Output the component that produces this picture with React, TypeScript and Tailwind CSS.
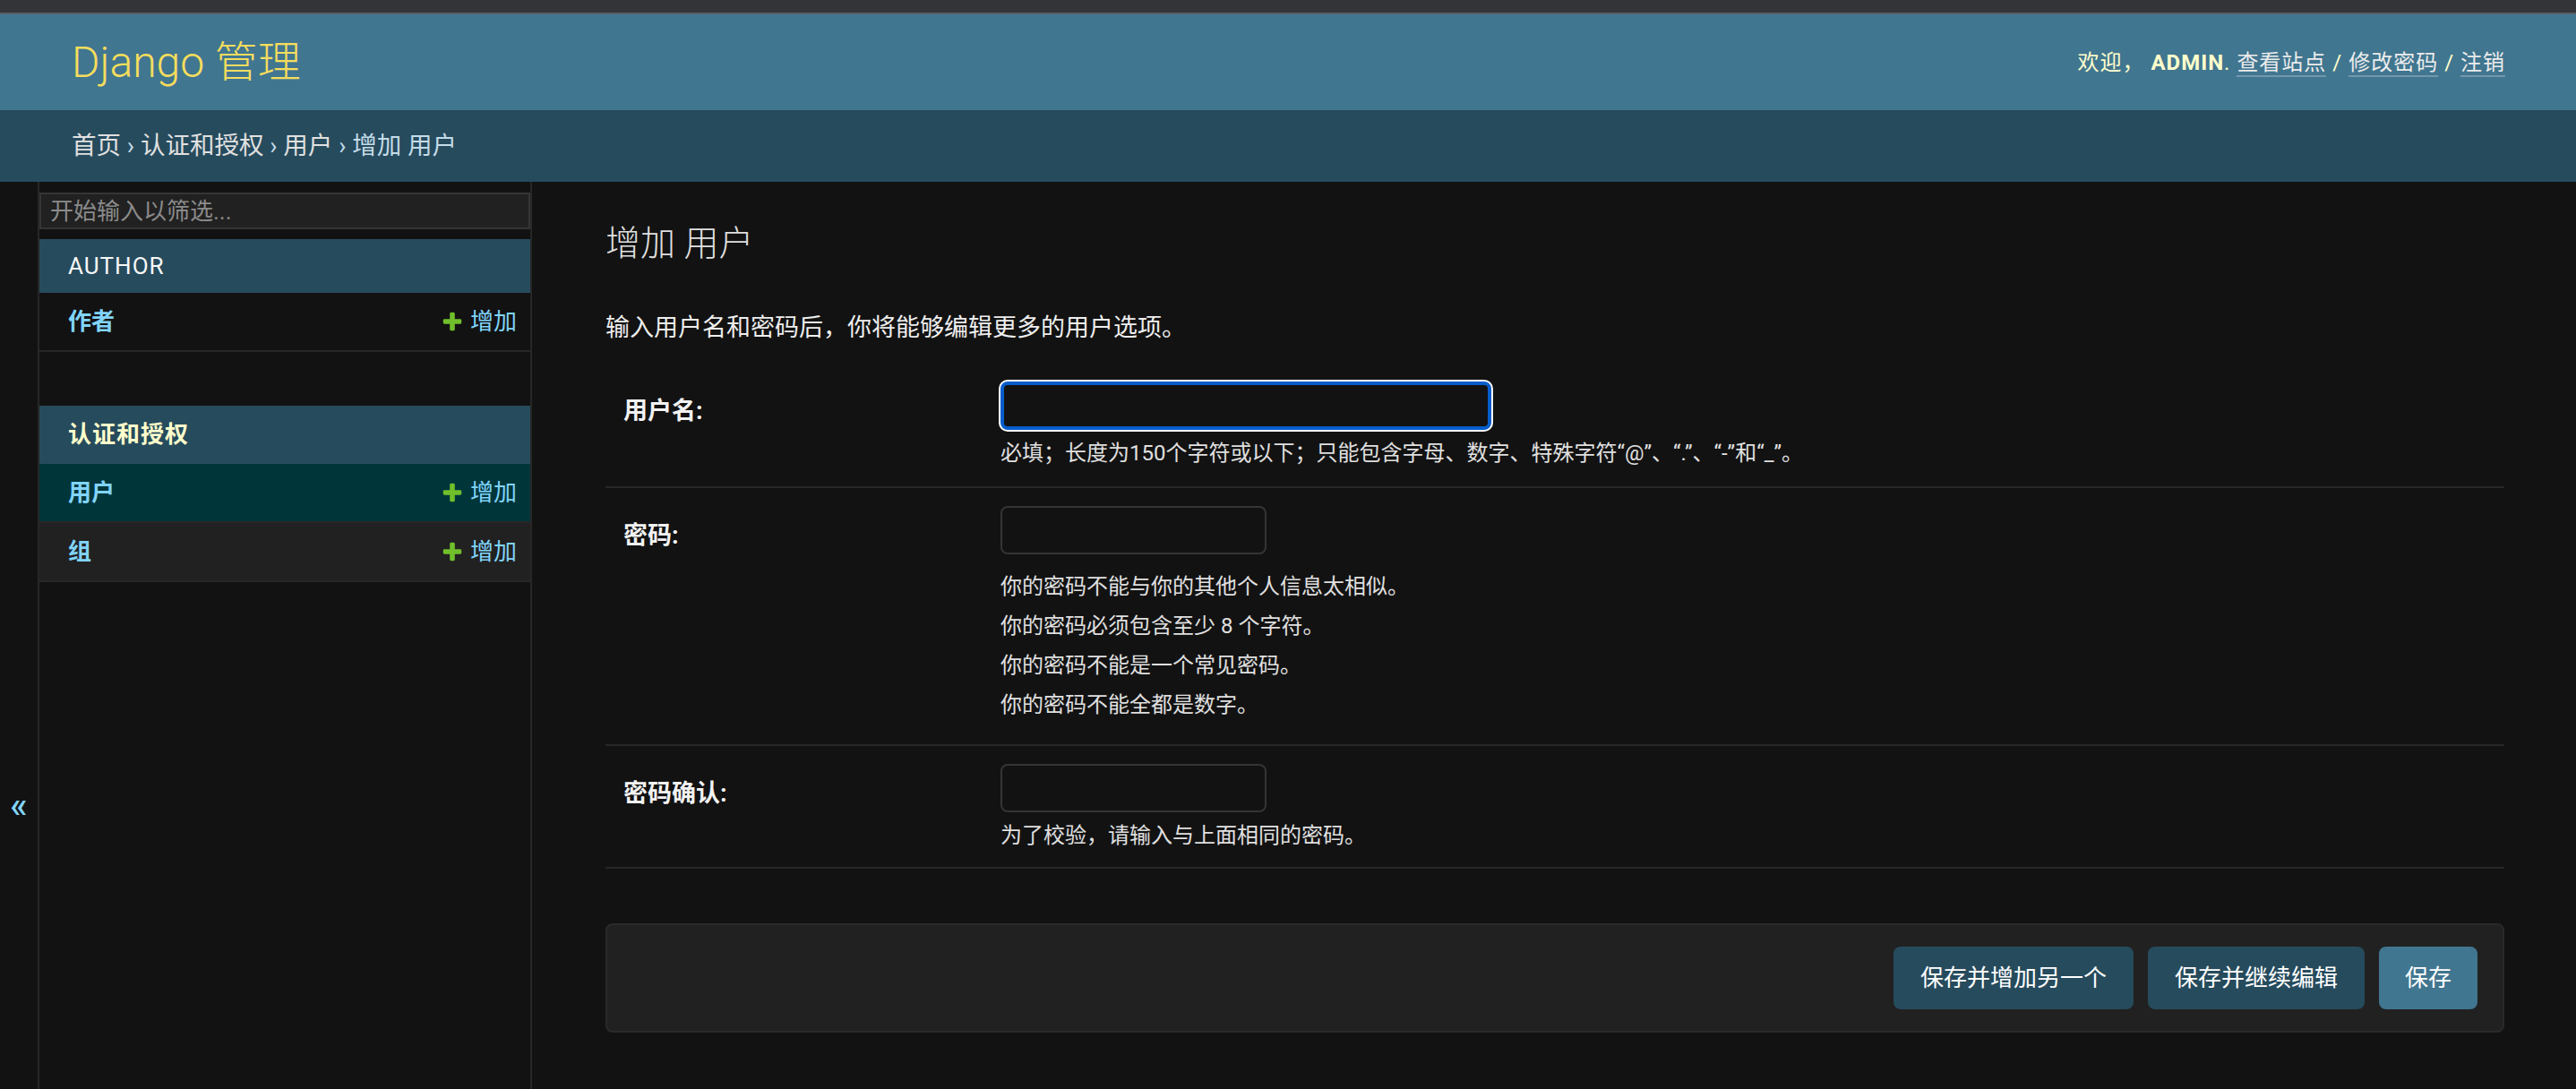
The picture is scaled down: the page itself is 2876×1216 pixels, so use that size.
import React from "react";

const AddIcon = () => (
  <svg viewBox="0 0 1792 1792" className="mr-[7px] h-[26px] w-[26px]">
    <path
      fill="#70bf2b"
      d="M1600 796v192q0 40-28 68t-68 28h-416v416q0 40-28 68t-68 28h-192q-40 0-68-28t-28-68v-416h-416q-40 0-68-28t-28-68v-192q0-40 28-68t68-28h416v-416q0-40 28-68t68-28h192q40 0 68 28t28 68v416h416q40 0 68 28t28 68z"
    />
  </svg>
);

function NavRow({ name, rowClass }: { name: string; rowClass: string }) {
  return (
    <div
      className={
        "flex h-[66px] items-center justify-between border-b-2 border-[#272727] pl-[32px] pr-[15px] " +
        rowClass
      }
    >
      <a className="text-[26px] font-bold text-[#81d4fa]">{name}</a>
      <a className="flex items-center text-[26px] text-[#81d4fa]">
        <AddIcon />
        增加
      </a>
    </div>
  );
}

export default function App() {
  return (
    <div className="flex h-[1216px] w-full flex-col overflow-hidden bg-[#121212] font-[family-name:Roboto,'Noto_Sans_CJK_SC',sans-serif] text-[#eeeeee]">
      <div className="h-[14px] bg-[#333438]" />
      <div className="h-[2px] bg-[#5a5e64]" />

      {/* header */}
      <header className="flex h-[107px] items-center justify-between bg-[#417690] pl-[80px] pr-[79px]">
        <div className="text-[48px] font-light leading-none text-[#f5dd5d]">Django 管理</div>
        <div className="text-[24px] leading-[30px] tracking-[1px] text-[#ffffcc]">
          欢迎，{" "}
          <strong className="font-bold">ADMIN</strong>.{" "}
          <a className="border-b-2 border-white/25 text-[#ececec]">查看站点</a> /{" "}
          <a className="border-b-2 border-white/25 text-[#ececec]">修改密码</a> /{" "}
          <a className="border-b-2 border-white/25 text-[#ececec]">注销</a>
        </div>
      </header>

      {/* breadcrumbs */}
      <nav className="flex h-[80px] items-center bg-[#264b5d] px-[80px] text-[27.5px] text-[#c4dce8]">
        <a className="text-[#e0e0e0]">首页</a>
        <span className="whitespace-pre"> › </span>
        <a className="text-[#e0e0e0]">认证和授权</a>
        <span className="whitespace-pre"> › </span>
        <a className="text-[#e0e0e0]">用户</a>
        <span className="whitespace-pre"> › 增加 用户</span>
      </nav>

      <div className="flex flex-1">
        {/* toggle */}
        <div className="flex w-[44px] shrink-0 flex-col items-center border-r-2 border-[#272727]">
          <span className="mt-[677px] text-[40px] font-medium leading-[40px] text-[#81d4fa]">«</span>
        </div>

        {/* sidebar */}
        <aside className="w-[550px] shrink-0 border-r-2 border-[#272727]">
          <input
            className="mb-[11px] mt-[12px] block h-[41px] w-full border-2 border-[#353535] bg-[#212121] px-[10px] text-[26px] text-[#eeeeee] outline-none placeholder:text-[#8b8b8b]"
            placeholder="开始输入以筛选..."
          />
          <div className="flex h-[60px] items-center bg-[#264b5d] pl-[32px] text-[26px] uppercase tracking-[1px] text-[#f7f7f7]">
            Author
          </div>
          <NavRow name="作者" rowClass="bg-[#121212]" />

          <div className="mt-[60px] flex h-[65px] items-center bg-[#264b5d] pl-[32px] text-[26px] font-bold tracking-[1px] text-[#ffffcc]">
            认证和授权
          </div>
          <NavRow name="用户" rowClass="bg-[#00363a]" />
          <NavRow name="组" rowClass="bg-[#212121]" />
        </aside>

        {/* content */}
        <main className="flex-1 pl-[82px] pr-[80px] pt-[40px]">
          <h1 className="text-[39px] font-light leading-[58px] text-[#e0e0e0]">增加 用户</h1>
          <p className="mt-[46px] text-[27px] leading-[38px] text-[#eeeeee]">
            输入用户名和密码后，你将能够编辑更多的用户选项。
          </p>

          <div className="mt-[21px]">
            {/* username */}
            <div className="flex border-b-2 border-[#272727] pb-[22px] pl-[20px] pt-[20px]">
              <label className="w-[421px] shrink-0 pt-[14px] text-[27px] font-bold leading-[38px] text-[#f2f2f2]">
                用户名:
              </label>
              <div>
                <input
                  className="block h-[54px] w-[548px] rounded-[8px] border-4 border-[#065dcb] bg-[#121212] px-[10px] text-[26px] text-[#eeeeee] outline-none ring-2 ring-white"
                  type="text"
                />
                <div className="mt-[11px] text-[24px] leading-[30px] text-[#e0e0e0]">
                  必填；长度为150个字符或以下；只能包含字母、数字、特殊字符“@”、“.”、“-”和“_”。
                </div>
              </div>
            </div>

            {/* password */}
            <div className="flex border-b-2 border-[#272727] pb-[22px] pl-[20px] pt-[20px]">
              <label className="w-[421px] shrink-0 pt-[14px] text-[27px] font-bold leading-[38px] text-[#f2f2f2]">
                密码:
              </label>
              <div>
                <input
                  className="block h-[54px] w-[297px] rounded-[8px] border-2 border-[#353535] bg-[#121212] px-[10px] text-[26px] outline-none"
                  type="password"
                />
                <ul className="mt-[14px] text-[24px] leading-[44px] text-[#e0e0e0]">
                  <li>你的密码不能与你的其他个人信息太相似。</li>
                  <li>你的密码必须包含至少 8 个字符。</li>
                  <li>你的密码不能是一个常见密码。</li>
                  <li>你的密码不能全都是数字。</li>
                </ul>
              </div>
            </div>

            {/* password confirm */}
            <div className="flex border-b-2 border-[#272727] pb-[20px] pl-[20px] pt-[20px]">
              <label className="w-[421px] shrink-0 pt-[14px] text-[27px] font-bold leading-[38px] text-[#f2f2f2]">
                密码确认:
              </label>
              <div>
                <input
                  className="block h-[54px] w-[297px] rounded-[8px] border-2 border-[#353535] bg-[#121212] px-[10px] text-[26px] outline-none"
                  type="password"
                />
                <div className="mt-[11px] text-[24px] leading-[30px] text-[#e0e0e0]">
                  为了校验，请输入与上面相同的密码。
                </div>
              </div>
            </div>
          </div>

          {/* submit row */}
          <div className="mt-[61px] flex h-[122px] items-center justify-end gap-[16px] rounded-[8px] border-2 border-[#2a2a2a] bg-[#212121] pr-[28px]">
            <button className="h-[70px] rounded-[8px] bg-[#264b5d] px-[30px] text-[26px] text-white">
              保存并增加另一个
            </button>
            <button className="h-[70px] rounded-[8px] bg-[#264b5d] px-[30px] text-[26px] text-white">
              保存并继续编辑
            </button>
            <button className="h-[70px] rounded-[8px] bg-[#417690] px-[29px] text-[26px] text-white">
              保存
            </button>
          </div>
        </main>
      </div>
    </div>
  );
}
